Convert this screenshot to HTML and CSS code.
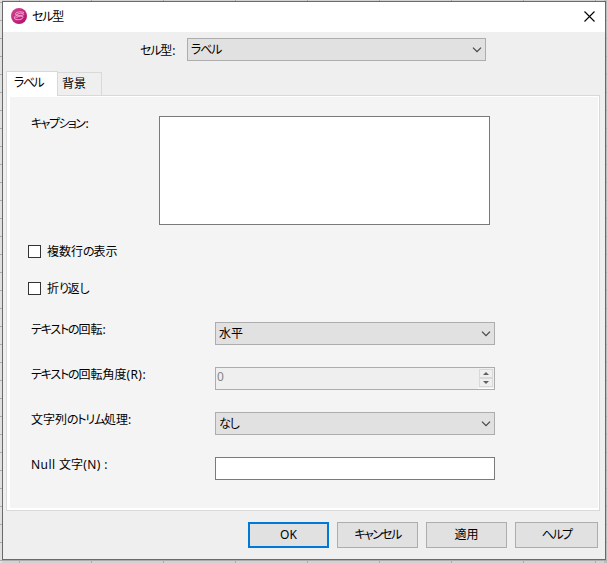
FILE: index.html
```html
<!DOCTYPE html>
<html lang="ja">
<head>
<meta charset="utf-8">
<title>セル型</title>
<link rel="stylesheet" href="styles.css">
</head>
<body>
<div class="dialog">
  <header class="titlebar">
    <svg class="logo" width="16" height="16" viewBox="0 0 16 16"><defs><linearGradient id="g" x2="1" y2="1"><stop offset="0" stop-color="#d24b94"/><stop offset="1" stop-color="#b3086b"/></linearGradient></defs><circle cx="8" cy="8" r="8" fill="url(#g)"/><path d="M13 4.500C9 3 4.500 4.300 4.500 6S8 7.700 11 7.300 13 5 9.500 5.300 3 8.800 3.500 10.500 10.500 12.300 11.800 9.800 8 7.800 4.500 9.800" fill="none" stroke="#f3b9d8" stroke-width=".9"/></svg>
    <h1><span class="kana">セル</span>型</h1>
    <svg class="close" width="11" height="11" viewBox="0 0 11 11"><path d="M.5 .5l10 10M10.500 .5l-10 10" stroke="#000" stroke-width="1.100"/></svg>
  </header>
  <div class="type-row">
    <span class="type-label"><span class="kana">セル</span>型:</span>
    <div class="combo"><span class="kana">ラベル</span><svg class="chevron" width="10" height="6" viewBox="0 0 10 6"><path d="M1 .7l4 4 4-4" fill="none" stroke="#444" stroke-width="1.200"/></svg></div>
  </div>
  <nav class="tabs">
    <div class="tab active"><span class="kana tight">ラベル</span></div>
    <div class="tab">背景</div>
  </nav>
  <main class="panel">
    <div class="caption-row"><label><span class="kana tight">キャプショ</span><span class="kana end">ン</span>:</label><div class="caption-box"></div></div>
    <div class="check"><span class="box"></span><span>複数行<span class="kana">の</span>表示</span></div>
    <div class="check"><span class="box"></span><span>折<span class="kana tight">り</span>返<span class="kana">し</span></span></div>
    <div class="fields">
      <label><span class="kana">テキストの</span>回転:</label>
      <div class="combo">水平<svg class="chevron" width="10" height="6" viewBox="0 0 10 6"><path d="M1 .7l4 4 4-4" fill="none" stroke="#444" stroke-width="1.200"/></svg></div>
      <label><span class="kana">テキストの</span>回転角度<span class="latin">(R):</span></label>
      <div class="spin"><span>0</span><div class="arrows"><i><svg width="6" height="3"><path d="M0 3L3 0l3 3z"/></svg></i><i><svg width="6" height="3"><path d="M0 0l3 3 3-3z"/></svg></i></div></div>
      <label>文字列<span class="kana">のトリム</span>処理:</label>
      <div class="combo"><span class="kana">なし</span><svg class="chevron" width="10" height="6" viewBox="0 0 10 6"><path d="M1 .7l4 4 4-4" fill="none" stroke="#444" stroke-width="1.200"/></svg></div>
      <label><span class="latin">Null </span>文字<span class="latin">(N) :</span></label>
      <div class="input"></div>
    </div>
  </main>
  <footer class="actions">
    <div class="btn default">OK</div>
    <div class="btn"><span class="kana tight">キャンセル</span></div>
    <div class="btn">適用</div>
    <div class="btn help"><span class="kana tight">ヘルプ</span></div>
  </footer>
</div>
</body>
</html>
```
FILE: styles.css
```css
* { box-sizing: border-box; }
body {
  margin: 0; width: 607px; height: 563px; padding: 1px 1px 3px 2px; overflow: hidden;
  font: 12px/16px "Noto Sans", "Noto Sans CJK JP", sans-serif; color: #000;
  background:
    repeating-linear-gradient(90deg, transparent 0 19px, #acacac 19px 20px, transparent 20px 72px),
    repeating-linear-gradient(180deg, transparent 0 2px, #acacac 2px 3px, transparent 3px 18px),
    linear-gradient(90deg, #e0e0e0 0 2px, #d2d2d2 2px 604px, #bdbdbd 604px);
}
.kana { font-feature-settings: "palt"; letter-spacing: -1.2px; }
.kana.tight { letter-spacing: -1.6px; }
.kana.end { letter-spacing: -.4px; }
.latin { letter-spacing: .45px; }
.dialog {
  width: 604px; height: 559px; display: flex; flex-direction: column;
  background: #efefef; border: 1px solid #6a6a6a;
}
.titlebar { height: 30px; flex: none; display: flex; align-items: center; padding: 0 10px 0 8px; background: #fff; }
.titlebar h1 { margin: 0 0 0 5px; font: inherit; }
.logo { margin-top: -2px; }
.close { margin: -2px 0 0 auto; }
.type-row { height: 39px; flex: none; display: flex; padding: 6px 0 0 137px; }
.type-label { width: 47px; padding-top: 5px; }
.combo {
  height: 23px; display: flex; align-items: center; justify-content: space-between;
  padding: 0 3px; background: #e1e1e1; border: 1px solid #adadad;
}
.type-row .combo { width: 299px; }
.tabs { height: 25px; flex: none; display: flex; align-items: flex-end; padding-left: 3px; position: relative; z-index: 1; margin-bottom: -1px; }
.tab { width: 45px; height: 24px; margin-left: -1px; padding: 3px 0 0 4px; border: 1px solid #d9d9d9; }
.tab.active { width: 52px; height: 25px; margin-left: 0; padding: 3px 0 0 7px; background: #fff; border-bottom: 0; }
.panel {
  width: 594px; height: 416px; flex: none; margin-left: 3px; padding: 19px 0 0 18px;
  background: #f4f4f4; border: 1px solid #d9d9d9; box-shadow: inset 3px 0 #fff, inset -1px 0 #fff, inset 0 1px #fff, inset 0 -2px #fff;
}
.caption-row { height: 130px; display: grid; grid-template-columns: 128px 331px; padding-left: 6px; }
.caption-row label { padding-top: 1px; }
.caption-box { width: 331px; height: 109px; margin-top: 1px; background: #fff; border: 1px solid #7a7a7a; }
.check { height: 37px; display: flex; align-items: flex-start; gap: 6px; padding-left: 3px; line-height: 13px; }
.box { width: 13px; height: 13px; background: #fff; border: 1px solid #333; }
.fields { display: grid; grid-template-columns: 184px 280px; grid-auto-rows: 23px; row-gap: 22px; padding: 3px 0 0 6px; }
.input { background: #fff; border: 1px solid #7a7a7a; }
.spin { display: flex; justify-content: space-between; background: #efefef; border: 1px solid #adadad; color: #858585; padding-left: 1px; }
.spin > span { padding-top: 1px; }
.arrows { width: 16px; padding: 1px 1px 0 0; border-bottom: 1px solid #fff; }
.arrows i { display: flex; align-items: center; justify-content: center; width: 14px; height: 9px; margin-left: 1px; border: 1px solid #d9d9d9; }
.arrows svg { fill: #606060; }
.actions { display: flex; gap: 8px; padding: 11px 0 0 245px; }
.btn { width: 81px; height: 26px; display: flex; align-items: center; justify-content: center; background: #e1e1e1; border: 1px solid #adadad; }
.btn.default { border: 2px solid #0078d7; }
.btn.help { width: 83px; }
```
